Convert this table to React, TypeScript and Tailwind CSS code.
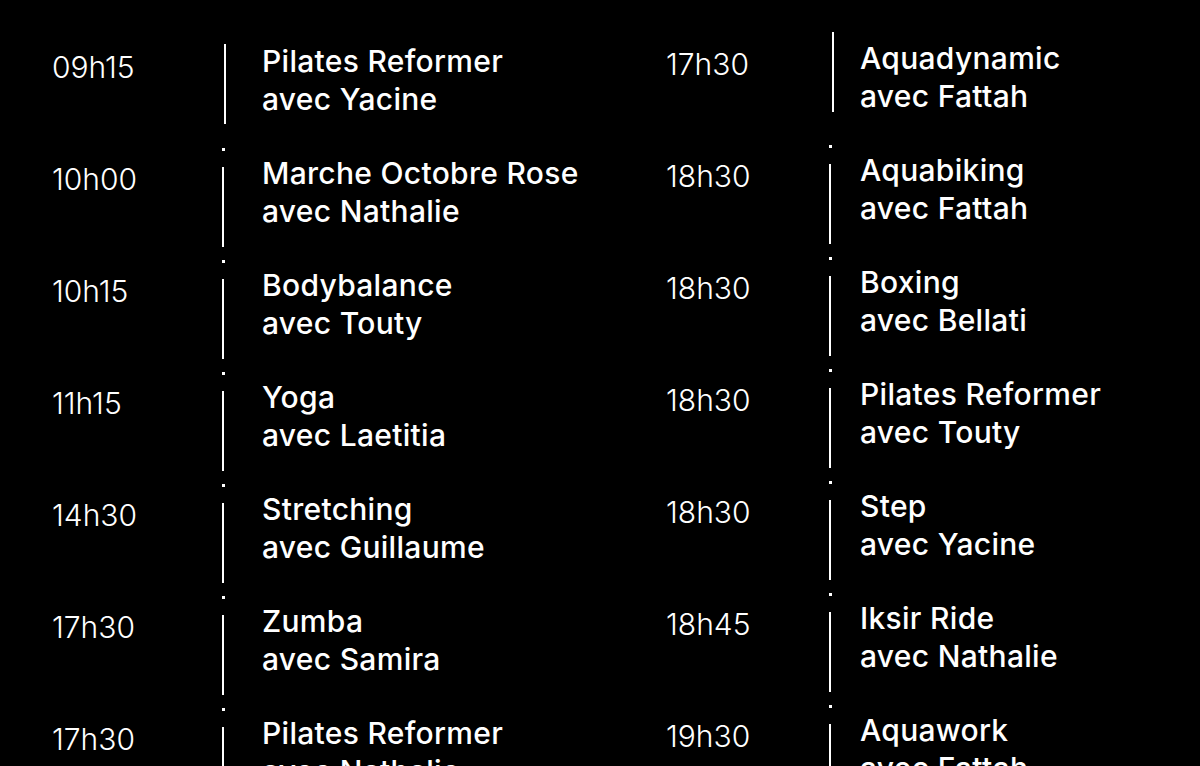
type Session = { time: string; title: string; coach: string };

const left: Session[] = [
  { time: "09h15", title: "Pilates Reformer", coach: "avec Yacine" },
  { time: "10h00", title: "Marche Octobre Rose", coach: "avec Nathalie" },
  { time: "10h15", title: "Bodybalance", coach: "avec Touty" },
  { time: "11h15", title: "Yoga", coach: "avec Laetitia" },
  { time: "14h30", title: "Stretching", coach: "avec Guillaume" },
  { time: "17h30", title: "Zumba", coach: "avec Samira" },
  { time: "17h30", title: "Pilates Reformer", coach: "avec Nathalie" },
];

const right: Session[] = [
  { time: "17h30", title: "Aquadynamic", coach: "avec Fattah" },
  { time: "18h30", title: "Aquabiking", coach: "avec Fattah" },
  { time: "18h30", title: "Boxing", coach: "avec Bellati" },
  { time: "18h30", title: "Pilates Reformer", coach: "avec Touty" },
  { time: "18h30", title: "Step", coach: "avec Yacine" },
  { time: "18h45", title: "Iksir Ride", coach: "avec Nathalie" },
  { time: "19h30", title: "Aquawork", coach: "avec Fattah" },
];

function Row({ s, first, side }: { s: Session; first: boolean; side: "left" | "right" }) {
  const isLeft = side === "left";
  return (
    <div className="flex h-[112px]">
      <div
        className={`${isLeft ? "w-[170px]" : "w-[163px]"} pt-[22px] text-[30px] font-light leading-[38px]`}
      >
        {s.time}
      </div>
      <div className={`${isLeft ? "w-[40px]" : "w-[31px]"} flex flex-col`}>
        {first ? (
          <div
            className={`${isLeft ? "ml-[2px] mt-[18px]" : "ml-[3px] mt-[9px]"} h-[80px] w-[2px] bg-white`}
          />
        ) : (
          <>
            <div className="mt-[10px] h-[3px] w-[3px] bg-white" />
            <div className="mt-[16px] h-[80px] w-[2px] bg-white" />
          </>
        )}
      </div>
      <div className="pt-[16px] text-[30px] font-[450] leading-[38px] tracking-[0.01em]">
        <div>{s.title}</div>
        <div>{s.coach}</div>
      </div>
    </div>
  );
}

export default function App() {
  return (
    <div
      className="h-[766px] overflow-hidden bg-black text-white"
      style={{ fontFamily: "Inter, 'Noto Sans', sans-serif" }}
    >
      <div className="flex pl-[52px]">
        <div className="w-[614px] pt-[26px]">
          {left.map((s, i) => (
            <Row key={i} s={s} first={i === 0} side="left" />
          ))}
        </div>
        <div className="pt-[23px]">
          {right.map((s, i) => (
            <Row key={i} s={s} first={i === 0} side="right" />
          ))}
        </div>
      </div>
    </div>
  );
}
